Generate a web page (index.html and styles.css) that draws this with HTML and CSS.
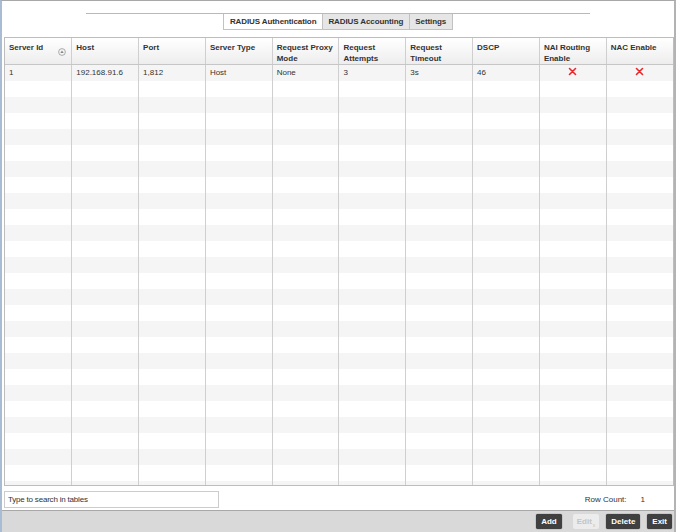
FILE: index.html
```html
<!DOCTYPE html>
<html>
<head>
<meta charset="utf-8">
<link rel="stylesheet" href="styles.css">
</head>
<body>
<div class="frame">
  <div class="main">
    <div class="tabbar">
      <div class="tab active">RADIUS Authentication</div>
      <div class="tab">RADIUS Accounting</div>
      <div class="tab">Settings</div>
    </div>
    <div class="grid-wrap">
      <table class="grid">
        <thead>
          <tr>
            <th><div class="th-sort"><span>Server Id</span><svg class="sort" width="8" height="8" viewBox="0 0 8 8"><circle cx="4" cy="4" r="3.4" fill="#f4f4f4" stroke="#999" stroke-width="0.8"/><path d="M2.3 5 L4 2.6 L5.7 5 Z" fill="#888"/></svg></div></th>
            <th>Host</th>
            <th>Port</th>
            <th>Server Type</th>
            <th>Request Proxy Mode</th>
            <th>Request Attempts</th>
            <th>Request Timeout</th>
            <th>DSCP</th>
            <th>NAI Routing Enable</th>
            <th>NAC Enable</th>
          </tr>
        </thead>
        <tbody id="rows">
          <tr>
            <td>1</td><td>192.168.91.6</td><td>1,812</td><td>Host</td><td>None</td><td>3</td><td>3s</td><td>46</td>
            <td class="c"><svg width="9" height="9" viewBox="0 0 9 9"><path d="M1.5 1.5 L7.5 7.5 M7.5 1.5 L1.5 7.5" stroke="#e8262b" stroke-width="1.6" stroke-linecap="round"/></svg></td>
            <td class="c"><svg width="9" height="9" viewBox="0 0 9 9"><path d="M1.5 1.5 L7.5 7.5 M7.5 1.5 L1.5 7.5" stroke="#e8262b" stroke-width="1.6" stroke-linecap="round"/></svg></td>
          </tr>
          <tr><td></td><td></td><td></td><td></td><td></td><td></td><td></td><td></td><td></td><td></td></tr>
          <tr><td></td><td></td><td></td><td></td><td></td><td></td><td></td><td></td><td></td><td></td></tr>
          <tr><td></td><td></td><td></td><td></td><td></td><td></td><td></td><td></td><td></td><td></td></tr>
          <tr><td></td><td></td><td></td><td></td><td></td><td></td><td></td><td></td><td></td><td></td></tr>
          <tr><td></td><td></td><td></td><td></td><td></td><td></td><td></td><td></td><td></td><td></td></tr>
          <tr><td></td><td></td><td></td><td></td><td></td><td></td><td></td><td></td><td></td><td></td></tr>
          <tr><td></td><td></td><td></td><td></td><td></td><td></td><td></td><td></td><td></td><td></td></tr>
          <tr><td></td><td></td><td></td><td></td><td></td><td></td><td></td><td></td><td></td><td></td></tr>
          <tr><td></td><td></td><td></td><td></td><td></td><td></td><td></td><td></td><td></td><td></td></tr>
          <tr><td></td><td></td><td></td><td></td><td></td><td></td><td></td><td></td><td></td><td></td></tr>
          <tr><td></td><td></td><td></td><td></td><td></td><td></td><td></td><td></td><td></td><td></td></tr>
          <tr><td></td><td></td><td></td><td></td><td></td><td></td><td></td><td></td><td></td><td></td></tr>
          <tr><td></td><td></td><td></td><td></td><td></td><td></td><td></td><td></td><td></td><td></td></tr>
          <tr><td></td><td></td><td></td><td></td><td></td><td></td><td></td><td></td><td></td><td></td></tr>
          <tr><td></td><td></td><td></td><td></td><td></td><td></td><td></td><td></td><td></td><td></td></tr>
          <tr><td></td><td></td><td></td><td></td><td></td><td></td><td></td><td></td><td></td><td></td></tr>
          <tr><td></td><td></td><td></td><td></td><td></td><td></td><td></td><td></td><td></td><td></td></tr>
          <tr><td></td><td></td><td></td><td></td><td></td><td></td><td></td><td></td><td></td><td></td></tr>
          <tr><td></td><td></td><td></td><td></td><td></td><td></td><td></td><td></td><td></td><td></td></tr>
          <tr><td></td><td></td><td></td><td></td><td></td><td></td><td></td><td></td><td></td><td></td></tr>
          <tr><td></td><td></td><td></td><td></td><td></td><td></td><td></td><td></td><td></td><td></td></tr>
          <tr><td></td><td></td><td></td><td></td><td></td><td></td><td></td><td></td><td></td><td></td></tr>
          <tr><td></td><td></td><td></td><td></td><td></td><td></td><td></td><td></td><td></td><td></td></tr>
          <tr><td></td><td></td><td></td><td></td><td></td><td></td><td></td><td></td><td></td><td></td></tr>
          <tr><td></td><td></td><td></td><td></td><td></td><td></td><td></td><td></td><td></td><td></td></tr>
          <tr><td></td><td></td><td></td><td></td><td></td><td></td><td></td><td></td><td></td><td></td></tr>
          <tr><td></td><td></td><td></td><td></td><td></td><td></td><td></td><td></td><td></td><td></td></tr>
        </tbody>
      </table>
    </div>
    <div class="searchrow">
      <div class="search">Type to search in tables</div>
      <div class="rowcount"><span>Row Count:</span><span class="num">1</span></div>
    </div>
  </div>
  <div class="bottombar">
    <div class="btn">Add</div>
    <div class="btn disabled">Edit<span class="sub">x</span></div>
    <div class="btn">Delete</div>
    <div class="btn">Exit</div>
  </div>
</div>
</body>
</html>
```
FILE: styles.css
```css
html, body {
  margin: 0;
  padding: 0;
  background: #ffffff;
}
body {
  font-family: "Liberation Sans", Arial, sans-serif;
  font-size: 8px;
  color: #333333;
}
.frame {
  width: 676px;
  height: 532px;
  box-sizing: border-box;
  border-top: 1px solid #a8a8a8;
  border-left: 2px solid #a9bcd4;
  border-right: 2px solid #b3b3b3;
  display: flex;
  flex-direction: column;
  background: #ffffff;
}
.main {
  flex: 1;
  padding: 0 0 0 2px;
  display: flex;
  flex-direction: column;
}
.tabbar {
  margin: 12px 0 0 82px;
  width: 504px;
  border-top: 1px solid #b9b9b9;
  display: flex;
  justify-content: center;
}
.tab {
  height: 16px;
  line-height: 15px;
  box-sizing: border-box;
  padding: 0 5.5px;
  border: 1px solid #c2c2c2;
  border-top: none;
  border-left: none;
  background: #e6e6e6;
  font-weight: bold;
  color: #333;
  font-size: 8px;
  letter-spacing: -0.1px;
}
.tab:first-child {
  border-left: 1px solid #c2c2c2;
}
.tab.active {
  background: #ffffff;
}
.grid-wrap {
  margin-top: 7px;
  width: 670px;
  height: 449px;
  box-sizing: border-box;
  border: 1px solid #bdbdbd;
  overflow: hidden;
}
.grid {
  width: 668px;
  table-layout: fixed;
  border-collapse: collapse;
}
.grid th {
  height: 26px;
  box-sizing: border-box;
  vertical-align: top;
  text-align: left;
  padding: 4px 4px 0 4px;
  font-weight: bold;
  color: #333;
  line-height: 11px;
  background: linear-gradient(#ffffff, #ededed);
  border-right: 1px solid #cfcfcf;
  border-bottom: 1px solid #c6c6c6;
}
.grid th:last-child,
.grid td:last-child {
  border-right: none;
}
.th-sort {
  display: flex;
  justify-content: space-between;
}
.sort {
  margin-top: 6px;
  margin-right: 1px;
}
.grid td {
  height: 16px;
  padding: 0 4px;
  box-sizing: border-box;
  line-height: 16px;
  border-right: 1px solid #cfcfcf;
  color: #333;
  white-space: nowrap;
}
.grid td.c {
  text-align: center;
  padding: 0;
}
.grid td.c svg {
  vertical-align: -1px;
}
.grid tbody tr:nth-child(odd) td {
  background: #f5f5f5;
}
.grid tbody tr:nth-child(even) td {
  background: #ffffff;
}
.searchrow {
  margin-top: 5px;
  width: 670px;
  display: flex;
  justify-content: space-between;
  align-items: center;
}
.search {
  width: 215px;
  height: 17px;
  box-sizing: border-box;
  border: 1px solid #cccccc;
  line-height: 15px;
  padding-left: 3px;
  color: #333;
  letter-spacing: -0.2px;
}
.rowcount {
  display: flex;
  color: #333;
  margin-right: 29px;
}
.rowcount .num {
  margin-left: 14px;
}
.bottombar {
  height: 22px;
  box-sizing: border-box;
  border-top: 1px solid #a8a8a8;
  background: #d9d9d9;
  display: flex;
  justify-content: flex-end;
  align-items: center;
  gap: 7px;
  padding-right: 2px;
}
.btn {
  height: 15px;
  line-height: 15px;
  padding: 0 5px;
  background: #404040;
  border-radius: 2px;
  color: #ffffff;
  font-weight: bold;
  font-size: 8px;
  box-shadow: 0 0 1px #222;
}
.btn:first-child {
  margin-right: 4px;
}
.btn.disabled {
  background: #ececec;
  color: #c4c4c4;
  box-shadow: none;
  padding: 0 4px;
}
.btn .sub {
  font-size: 5px;
  font-weight: normal;
  vertical-align: -3px;
  margin-left: 1px;
}
```
